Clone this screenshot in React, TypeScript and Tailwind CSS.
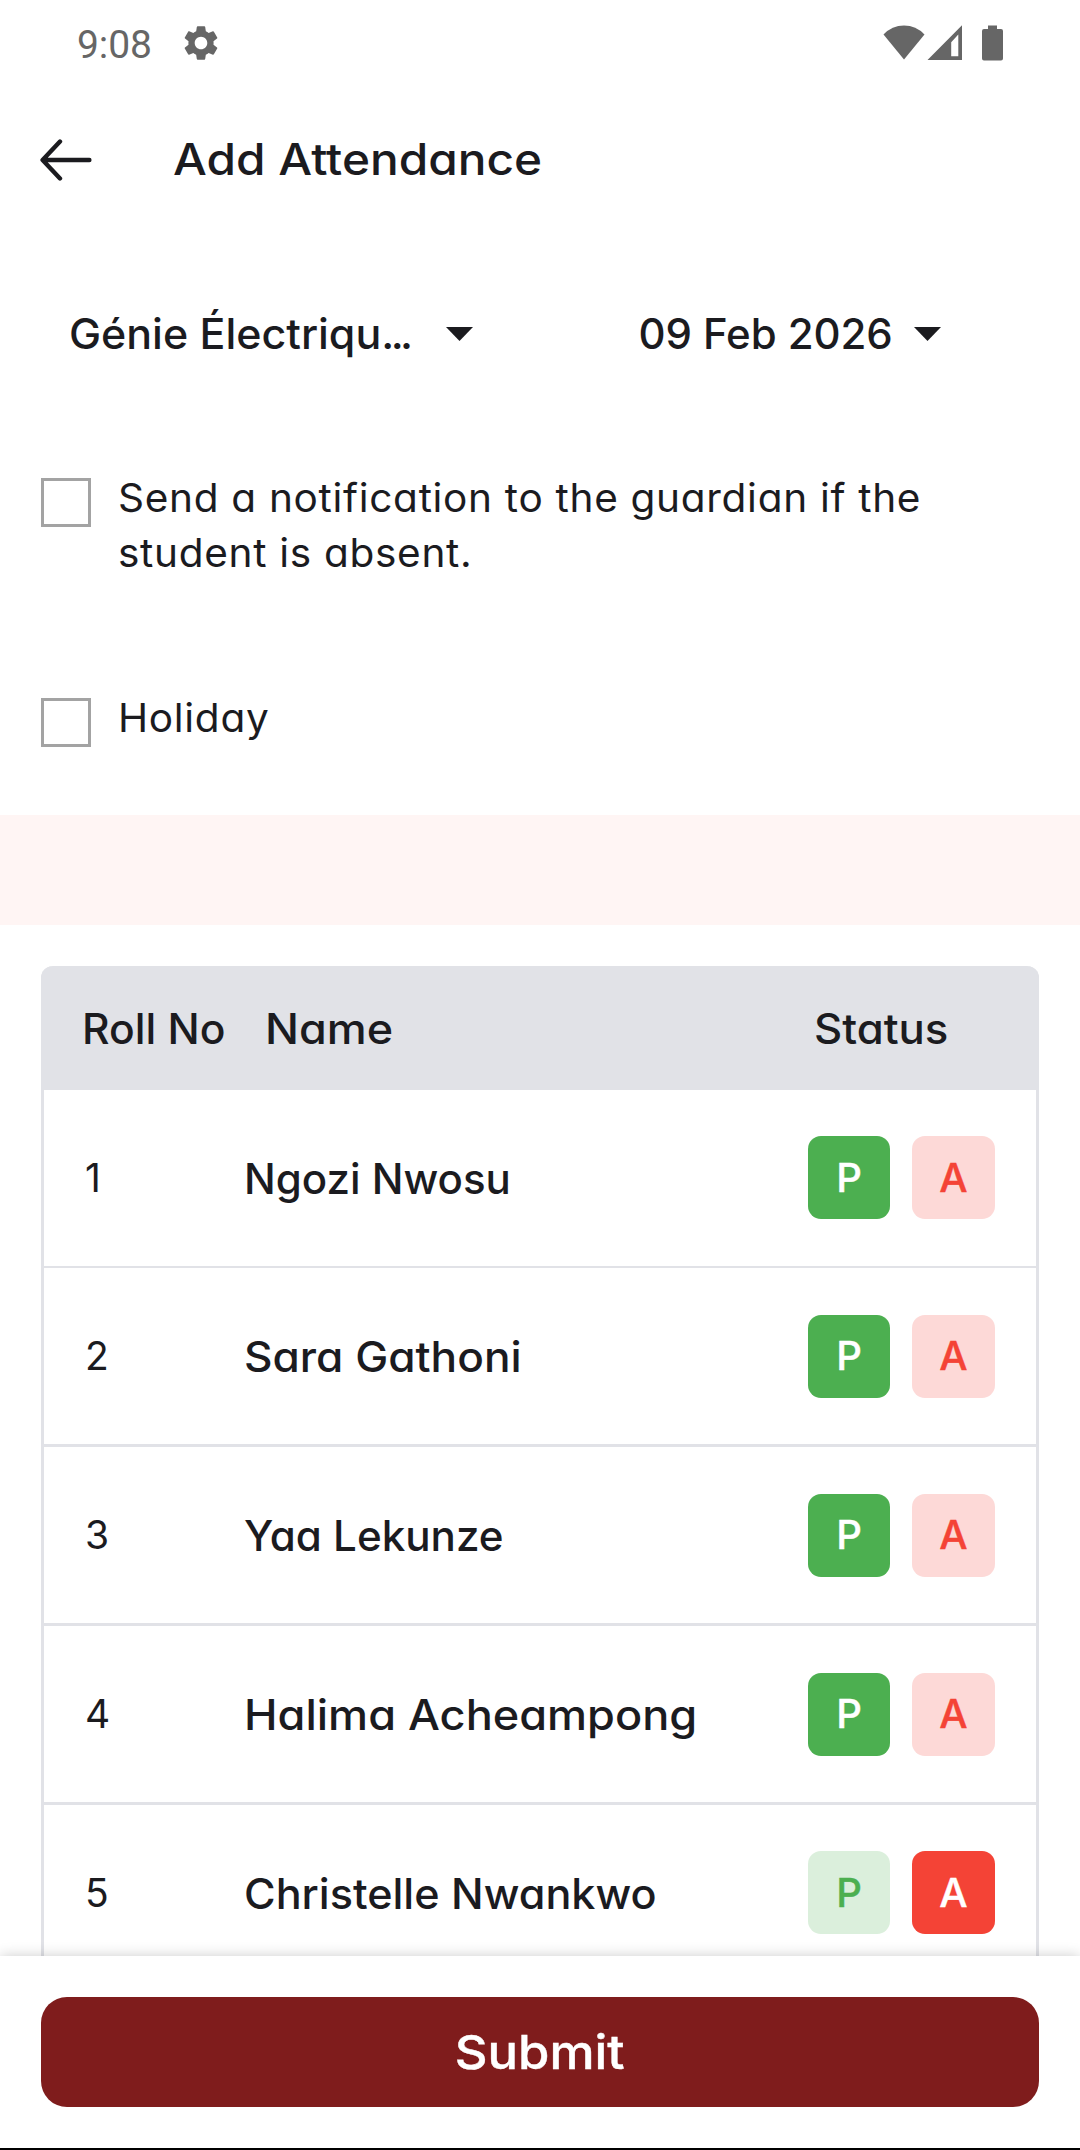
import type { ReactNode } from "react";
import { MdSettings } from "react-icons/md";

type Student = {
  roll: number;
  name: string;
  present: boolean;
  stretch: string;
  divider: string;
  nudge: string;
};

const students: Student[] = [
  { roll: 1, name: "Ngozi Nwosu", present: true, stretch: "scale-x-[1]", divider: "border-b-2", nudge: "pb-px" },
  { roll: 2, name: "Sara Gathoni", present: true, stretch: "scale-x-[1.052]", divider: "border-b-3", nudge: "pb-0" },
  { roll: 3, name: "Yaa Lekunze", present: true, stretch: "scale-x-[1.004]", divider: "border-b-3", nudge: "pb-0" },
  { roll: 4, name: "Halima Acheampong", present: true, stretch: "scale-x-[1.073]", divider: "border-b-3", nudge: "pb-0" },
  { roll: 5, name: "Christelle Nwankwo", present: false, stretch: "scale-x-[1.027]", divider: "border-b-3", nudge: "pb-px" },
];

function Label({ className, children }: { className: string; children: ReactNode }) {
  return <span className={`inline-block origin-left font-medium whitespace-nowrap ${className}`}>{children}</span>;
}

function StatusBar() {
  return (
    <div className="flex h-[86px] items-center justify-between px-[77px] text-[#666666]">
      <div className="flex items-center">
        <span className="w-[103px] pt-[3px] font-[Roboto,sans-serif] text-[39px] leading-[46px] tracking-[-0.09px]">9:08</span>
        <MdSettings className="size-[42px]" />
      </div>
      <div className="flex items-center">
        <svg className="h-[36px] w-[42px]" viewBox="0 0 42 36" fill="currentColor">
          <path d="M0.5 9.5Q9 0.5 21 0.5T41.5 9.5L21 34.5Z" />
        </svg>
        <svg className="ml-[2px] h-[36px] w-[36px]" viewBox="0 0 36 36" fill="currentColor" fillRule="evenodd">
          <path d="M35 0.3V35H0.5ZM24.2 17.2V31.3H31.3V9.6Z" />
        </svg>
        <svg className="ml-[19px] h-[36px] w-[21px]" viewBox="0 0 21 36" fill="currentColor">
          <path d="M6 0.5H15V4H19Q21 4 21 6V33.5Q21 35.5 19 35.5H2Q0 35.5 0 33.5V6Q0 4 2 4H6Z" />
        </svg>
      </div>
    </div>
  );
}

function AppBar() {
  return (
    <header className="flex h-[148px] items-center pl-[40px]">
      <svg className="h-[44px] w-[54px]" viewBox="0 0 54 44" fill="none" stroke="currentColor" strokeWidth="4.4" strokeLinecap="round" strokeLinejoin="round">
        <path d="M20 3.6L2.6 22L20 40.4M3 22H49.4" />
      </svg>
      <h1 className="ml-[79px] pb-[2px] text-[44px] leading-[56px]">
        <Label className="scale-x-[1.086]">Add Attendance</Label>
      </h1>
    </header>
  );
}

function Caret() {
  return (
    <svg className="mt-[2px] h-[14px] w-[27px]" viewBox="0 0 27 14" fill="currentColor">
      <path d="M0 0H27L13.5 14Z" />
    </svg>
  );
}

function Filters() {
  return (
    <div className="flex h-[198px] items-center pl-[68.5px] text-[42px]">
      <button className="flex w-[570px] items-center">
        <span className="w-[377.5px] text-left">
          <Label className="scale-x-[1.022]">
            Génie Électriqu<span className="tracking-[-3.5px]">...</span>
          </Label>
        </span>
        <Caret />
      </button>
      <button className="flex items-center">
        <span className="w-[275.5px] text-left">
          <Label className="tracking-[-0.1px]">09 Feb 2026</Label>
        </span>
        <Caret />
      </button>
    </div>
  );
}

function CheckRow({ className, children }: { className: string; children: ReactNode }) {
  return (
    <label className={`flex items-start pl-[41px] ${className}`}>
      <span className="mt-[8px] h-[49px] w-[50px] border-3 border-[#a3a3a3]" />
      <span className="ml-[27px] origin-left scale-x-[1.04] text-[39px] leading-[55px] tracking-[0.66px] whitespace-nowrap">{children}</span>
    </label>
  );
}

function StatusButtons({ present, nudge }: { present: boolean; nudge: string }) {
  return (
    <div className={`flex gap-[22px] text-[40px] font-medium [-webkit-text-stroke:0.4px_currentColor] ${nudge}`}>
      <button className={`flex h-[83px] w-[82px] items-center justify-center rounded-[13px] ${present ? "bg-[#4caf50] text-white" : "bg-[#dbefdc] text-[#4caf50]"}`}>
        P
      </button>
      <button className={`flex h-[83px] w-[83px] items-center justify-center rounded-[13px] ${present ? "bg-[#fdd9d7] text-[#f44336]" : "bg-[#f44336] text-white"}`}>
        A
      </button>
    </div>
  );
}

function AttendanceTable() {
  return (
    <section className="mx-[41px] mt-[41px] rounded-t-[12px] border-x-3 border-[#e1e2e7]">
      <div className="-mx-[3px] flex h-[124px] items-center rounded-t-[12px] bg-[#e1e2e7] pl-[41px] text-[42px]">
        <span className="w-[183px]">
          <Label className="scale-x-[1.014]">Roll No</Label>
        </span>
        <span className="w-[549px]">
          <Label className="scale-x-[1.07]">Name</Label>
        </span>
        <Label className="scale-x-[1.04]">Status</Label>
      </div>
      {students.map((s) => (
        <div key={s.roll} className={`box-content flex h-[176px] items-center border-[#e1e2e7] pl-[41px] ${s.divider}`}>
          <span className="w-[159px] text-[39px]">{s.roll}</span>
          <span className="w-[564px] text-[42px]">
            <Label className={s.stretch}>{s.name}</Label>
          </span>
          <StatusButtons present={s.present} nudge={s.nudge} />
        </div>
      ))}
    </section>
  );
}

export default function App() {
  return (
    <div className="flex h-[2150px] w-[1080px] flex-col overflow-hidden bg-white font-[Inter,sans-serif] text-[#1b1b1f] [font-feature-settings:'cv11']">
      <main className="h-[1956px] shrink-0 overflow-hidden">
        <StatusBar />
        <AppBar />
        <Filters />
        <CheckRow className="mt-[38px] h-[220px]">
          Send a notification to the guardian if the
          <br />
          student is absent.
        </CheckRow>
        <CheckRow className="h-[125px]">Holiday</CheckRow>
        <div className="h-[110px] bg-[#fff5f4]" />
        <AttendanceTable />
      </main>
      <footer className="relative h-[194px] shrink-0 border-b-2 border-black bg-white px-[41px] pt-[41px] shadow-[0_0_13px_rgba(0,0,0,0.2)]">
        <button className="flex h-[110px] w-full items-center justify-center rounded-[26px] bg-[#7f1c1c] text-[47px] text-white">
          <span className="scale-x-[1.08] font-medium [-webkit-text-stroke:0.4px_currentColor]">Submit</span>
        </button>
      </footer>
    </div>
  );
}
